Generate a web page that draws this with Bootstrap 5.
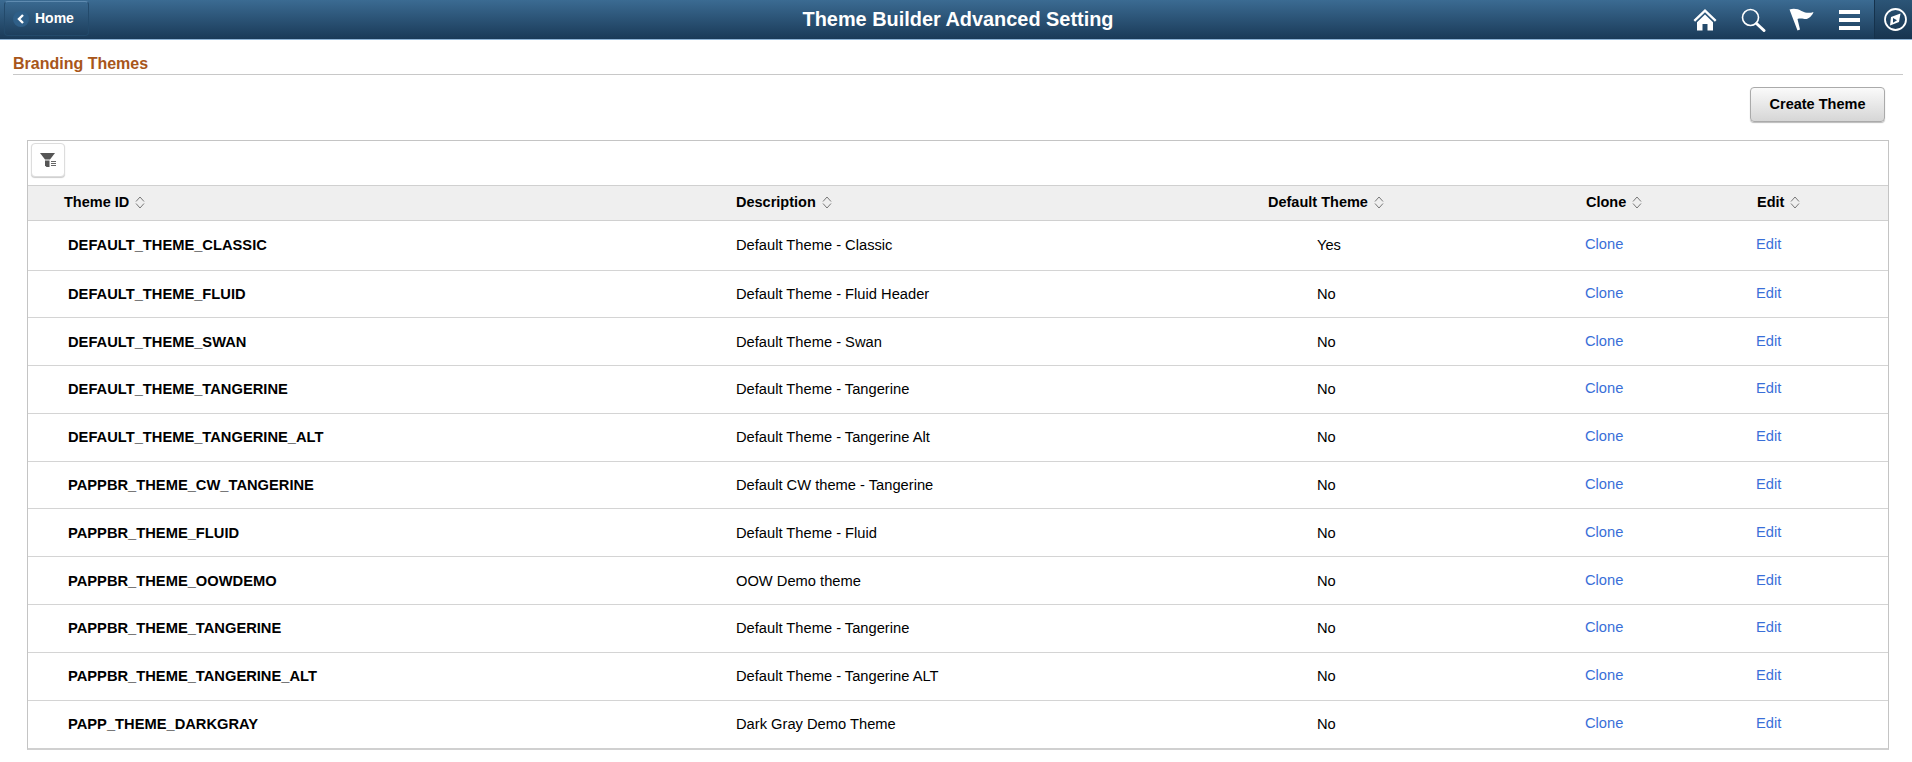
<!DOCTYPE html>
<html lang="en">
<head>
  <meta charset="UTF-8">
  <title>Theme Builder Advanced Setting</title>
  <link rel="stylesheet" href="https://cdn.jsdelivr.net/npm/bootstrap@5.3.0/dist/css/bootstrap.min.css">
  <style>
    body { font-family: "Liberation Sans", Arial, sans-serif; font-size: 14.7px; color: #000; background: #fff; }
    .top-bar { height: 40px; background: linear-gradient(#3b6b92, #1a3a58); border-bottom: 1px solid #8fb4d6; padding: 1px 0 0 4px; }
    .top-side { width: 420px; }
    .top-title { color: #fff; font-size: 19.900px; font-weight: 700; line-height: 36px; }
    .home-btn { width: 85px; height: 35px; border: 1px solid #234a6b; border-top-color: #5f8bb0; border-radius: 4px; color: #fff; font-size: 14px; font-weight: 700; text-decoration: none; padding-left: 8px; gap: 6px; }
    .home-dot { width: 16px; height: 16px; border-radius: 50%; background: #2f5f88; }
    .top-icons { height: 39px; margin-top: -1px; }
    .top-icon { width: 48px; }
    .nav-compass { width: 38px; height: 39px; margin-left: 1px; padding-left: 4px; border-left: 1px solid #15324c; background: linear-gradient(#2c5577, #17344f); }
    .page-head { margin: 14px 9px 0 13px; height: 21px; border-bottom: 1px solid #c8c8c8; color: #a8561a; font-size: 16px; font-weight: 700; line-height: 19px; }
    .create-row { padding: 12px 27px 0 0; }
    .create-btn { width: 135px; height: 35px; padding: 0; border: 1px solid #aaa; border-radius: 4px; background: linear-gradient(#fafafa, #d6d6d6); color: #000; font-size: 14.500px; font-weight: 700; box-shadow: 0 1px 1px #bbb; }
    .grid-box { margin: 18px 23px 0 27px; border: 1px solid #c4c4c4; border-bottom: 2px solid #d0d0d0; }
    .grid-tools { height: 44px; padding: 2px 0 0 3px; }
    .filter-btn { width: 34px; height: 34px; padding: 0; border: 1px solid #ddd; border-radius: 4px; background: #fff; box-shadow: 0 1px 1px #ccc; }
    .theme-table { table-layout: fixed; font-size: 14.7px; color: #000; }
    .theme-table th { height: 35px; padding: 0 0 0 8px; background: #efefef; font-size: 14.500px; font-weight: 700; vertical-align: middle; border-top: 1px solid #d0d0d0; border-bottom: 1px solid #d0d0d0; white-space: nowrap; }
    .theme-table td { height: 47.800px; padding: 0 0 0 8px; vertical-align: middle; border-bottom: 1px solid #d4d4d4; }
    .theme-table tr:first-child td { height: 49.500px; }
    .theme-table tr:last-child td { border-bottom: 0; }
    .theme-table a { color: #3a6fd8; text-decoration: none; }
    .theme-table .id-head { padding-left: 36px; }
    .theme-table .id-cell { padding-left: 40px; font-weight: 700; }
    .theme-table .yes-cell { padding-left: 57px; }
    .theme-table .link-cell { padding-left: 7px; padding-bottom: 2px; }
    .col-id { width: 700px; }
    .col-desc { width: 532px; }
    .col-def { width: 318px; }
    .col-clone { width: 171px; }
    .sort-ico { margin-left: 6px; vertical-align: -2px; }
  </style>
</head>
<body>
  <!-- Header -->
  <header class="top-bar d-flex align-items-start">
    <div class="top-side">
      <a class="home-btn d-inline-flex align-items-center" href="#">
        <span class="home-dot d-flex align-items-center justify-content-center">
          <svg width="8" height="10" viewBox="0 0 8 10"><path d="M6 1 2 5l4 4" fill="none" stroke="#fff" stroke-width="2.400"/></svg>
        </span>
        Home
      </a>
    </div>
    <div class="top-title flex-fill text-center">Theme Builder Advanced Setting</div>
    <div class="top-side top-icons d-flex justify-content-end align-items-center">
      <span class="top-icon d-flex justify-content-center">
        <svg width="24" height="23" viewBox="0 0 24 23"><path d="M12 1 0.5 12l1.6 1.7L12 4.3l9.9 9.4 1.6-1.7z" fill="#fff"/><path d="M4 14.2 12 6.6l8 7.6V22.500h-5.500v-6.500h-5V22.500H4z" fill="#fff"/></svg>
      </span>
      <span class="top-icon d-flex justify-content-center">
        <svg width="25" height="24" viewBox="0 0 25 24"><circle cx="9.500" cy="9.500" r="8" fill="none" stroke="#fff" stroke-width="1.600"/><path d="m15.500 15.500 7.500 7" stroke="#fff" stroke-width="3" stroke-linecap="round"/></svg>
      </span>
      <span class="top-icon d-flex justify-content-center">
        <svg width="25" height="23" viewBox="0 0 25 23"><path d="M0.500 1.500C5 0 9 1 12.500 3c4 2 8 2.500 12 1-1.500 4-5 7.500-9 7-3-0.400-5-0.600-7 0L11 21.500 8.500 22.500z" fill="#fff"/></svg>
      </span>
      <span class="top-icon d-flex justify-content-center">
        <svg width="21" height="20" viewBox="0 0 21 20"><path d="M0 0h21v4H0zM0 8h21v4H0zM0 16h21v4H0z" fill="#fff"/></svg>
      </span>
      <span class="nav-compass d-flex align-items-center justify-content-center">
        <svg width="25" height="25" viewBox="0 0 25 25"><circle cx="12.500" cy="12.500" r="10.500" fill="none" stroke="#fff" stroke-width="1.800"/><path d="m17.500 6.500-9.500 3.500-1 8.500 9-3.500z" fill="#fff"/><path d="m10 11 4 2.300-4 2.400z" fill="#1f4464"/></svg>
      </span>
    </div>
  </header>

  <div class="page-head">Branding Themes</div>

  <div class="create-row d-flex justify-content-end">
    <button class="btn create-btn">Create Theme</button>
  </div>

  <!-- Grid -->
  <div class="grid-box">
    <div class="grid-tools">
      <button class="btn filter-btn d-flex align-items-center justify-content-center">
        <svg width="17" height="16" viewBox="0 0 17 16"><path d="M0 1h15L10 7.500H5z" fill="#555"/><path d="M5 8.500h4.500V15H6.500L5 13.500z" fill="#555"/><path d="M11 9.500h5M11 11.500h5M11 13.500h5" stroke="#666" stroke-width="1"/></svg>
      </button>
    </div>
    <table class="table theme-table mb-0">
      <colgroup>
        <col class="col-id"><col class="col-desc"><col class="col-def"><col class="col-clone"><col>
      </colgroup>
      <thead>
        <tr id="filaCabecera"></tr>
      </thead>
      <tbody id="listaTemas"></tbody>
    </table>
  </div>

  <script src="https://cdn.jsdelivr.net/npm/bootstrap@5.3.0/dist/js/bootstrap.bundle.min.js"></script>
  <script>
    const temas = [
      ['DEFAULT_THEME_CLASSIC', 'Default Theme - Classic', 'Yes'],
      ['DEFAULT_THEME_FLUID', 'Default Theme - Fluid Header', 'No'],
      ['DEFAULT_THEME_SWAN', 'Default Theme - Swan', 'No'],
      ['DEFAULT_THEME_TANGERINE', 'Default Theme - Tangerine', 'No'],
      ['DEFAULT_THEME_TANGERINE_ALT', 'Default Theme - Tangerine Alt', 'No'],
      ['PAPPBR_THEME_CW_TANGERINE', 'Default CW theme - Tangerine', 'No'],
      ['PAPPBR_THEME_FLUID', 'Default Theme - Fluid', 'No'],
      ['PAPPBR_THEME_OOWDEMO', 'OOW Demo theme', 'No'],
      ['PAPPBR_THEME_TANGERINE', 'Default Theme - Tangerine', 'No'],
      ['PAPPBR_THEME_TANGERINE_ALT', 'Default Theme - Tangerine ALT', 'No'],
      ['PAPP_THEME_DARKGRAY', 'Dark Gray Demo Theme', 'No']
    ];

    const iconoOrden = '<svg class="sort-ico" width="10" height="13" viewBox="0 0 10 13"><path d="M1 5.500 5 1l4 4.500M1 7.500 5 12l4-4.500" fill="none" stroke="#777" stroke-width="1"/></svg>';

    document.getElementById('filaCabecera').innerHTML =
      ['Theme ID', 'Description', 'Default Theme', 'Clone', 'Edit'].map((t, i) =>
        `<th class="${i === 0 ? 'id-head' : ''}">${t}${iconoOrden}</th>`).join('');

    document.getElementById('listaTemas').innerHTML = temas.map(t => `
      <tr>
        <td class="id-cell">${t[0]}</td>
        <td>${t[1]}</td>
        <td class="yes-cell">${t[2]}</td>
        <td class="link-cell"><a href="#">Clone</a></td>
        <td class="link-cell"><a href="#">Edit</a></td>
      </tr>`).join('');
  </script>
</body>
</html>
